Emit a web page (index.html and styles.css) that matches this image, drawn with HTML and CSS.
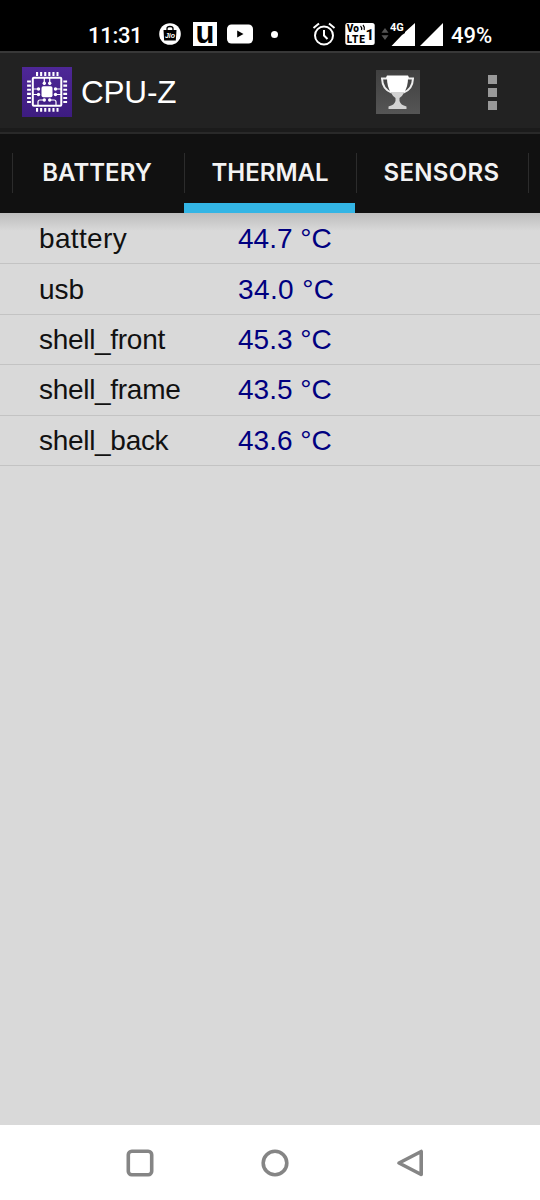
FILE: index.html
```html
<!DOCTYPE html>
<html lang="en">
<head>
  <meta charset="UTF-8" />
  <meta name="viewport" content="width=device-width, initial-scale=1.0"/>
  <title>CPU-Z</title>
  <link rel="stylesheet" href="styles.css">
</head>
<body>

  <!-- Status bar -->
  <div class="status-bar">
    <span class="clock">11:31</span>
    <svg class="jio" width="22" height="22" viewBox="0 0 22 22">
      <circle cx="11" cy="11" r="10.8" fill="#fff"/>
      <path d="M4.500 7h13l-.7 10.500H5.200z" fill="#000"/>
      <path d="M8 8V5.500q0-2 3-2t3 2V8" fill="none" stroke="#000" stroke-width="1.300"/>
      <text x="11" y="14.600" class="jio-text">Jio</text>
    </svg>
    <svg class="u-icon" width="24" height="24" viewBox="0 0 24 24">
      <path d="M0 0h24v24H0z" fill="#fff"/>
      <text x="12" y="20.500" class="u-text">u</text>
    </svg>
    <svg class="youtube" width="26" height="20" viewBox="0 0 26 20">
      <rect y=".5" width="26" height="19" rx="4.500" fill="#fff"/>
      <path d="M10.200 6.500v7l6.300-3.500z" fill="#000"/>
    </svg>
    <span class="dot"></span>
    <svg class="alarm" width="24" height="24" viewBox="0 0 24 24" fill="none" stroke="#fff" stroke-width="2">
      <circle cx="12" cy="13.500" r="9"/>
      <path d="M12 8v5.500l3.500 3.500M1.500 6 7 1.500M22.500 6 17 1.500"/>
    </svg>
    <svg class="volte" width="30" height="22" viewBox="0 0 30 22">
      <rect x=".3" width="29.400" height="22" rx="2.500" fill="#fff"/>
      <text x="1.800" y="9" class="volte-text">Vo</text>
      <text x="1.800" y="20" textLength="18" class="volte-text">LTE</text>
      <text x="20.500" y="17" class="volte-sim">1</text>
      <path d="M15.500 3q1.600 1.500 1 4M18 2q2 2 1.200 5" fill="none" stroke="#000" stroke-width="1.200"/>
    </svg>
    <svg class="arrows" width="8" height="12" viewBox="0 0 8 12">
      <path d="M4 0l3.500 4.800H.5zM4 12l3.500-4.800H.5z" fill="#555"/>
    </svg>
    <svg class="signal" width="26" height="24" viewBox="0 0 26 24">
      <path d="M25 1v23H1.500L12 13l3-2V10z" fill="#fff"/>
      <text x="0" y="9" class="signal-text">4G</text>
    </svg>
    <svg class="signal-two" width="23" height="24" viewBox="0 0 23 24">
      <path d="M23 1v23H0z" fill="#fff"/>
    </svg>
    <span class="percent">49%</span>
  </div>

  <!-- Action bar -->
  <header>
    <svg class="logo" width="50" height="50" viewBox="0 0 50 50">
      <defs>
        <linearGradient id="purple" x1="0" y1="0" x2="0" y2="1">
          <stop offset="0" stop-color="#4e2797"/>
          <stop offset="1" stop-color="#3d1c80"/>
        </linearGradient>
      </defs>
      <path d="M0 0h50v50H0z" fill="url(#purple)"/>
      <g fill="none" stroke="#fff">
        <path d="M14 7h22.500M14 42.800h22.500" stroke-width="3.800" stroke-dasharray="2.100 2"/>
        <path d="M7 13.500v22.600M43.200 13.500v22.600" stroke-width="3.800" stroke-dasharray="2.100 2"/>
        <rect x="10.800" y="10.800" width="28.500" height="28" rx="1" stroke-width="2"/>
        <path d="M22.300 11v7M27.700 11v7M11 22h7M11 27.500h7M39 22h-7M39 27.500h-7M16 38v-3q0-2 2-2h4.300M34 38v-3q0-2-2-2h-4.300" stroke-width="1.200"/>
      </g>
      <g fill="#fff">
        <rect x="19.500" y="19.300" width="11" height="11" rx="1.800"/>
        <circle cx="22.300" cy="16.300" r="1.700"/><circle cx="27.700" cy="16.300" r="1.700"/>
        <circle cx="16.500" cy="22" r="1.700"/><circle cx="16.500" cy="27.500" r="1.700"/>
        <circle cx="33.500" cy="22" r="1.700"/><circle cx="33.500" cy="27.500" r="1.700"/>
        <circle cx="22.300" cy="33" r="1.700"/><circle cx="27.700" cy="33" r="1.700"/>
      </g>
    </svg>
    <h1>CPU-Z</h1>
    <button class="trophy">
      <svg width="44" height="44" viewBox="0 0 44 44">
        <path d="M12 8.500H6q.5 11 9.500 14M31 8.500h6q-.5 11-9.500 14" fill="none" stroke="#eee" stroke-width="2"/>
        <path d="M11 5.500h21l1 2-1 1q0 7.500-3.500 13.500H14.500Q11 16 11 8.500l-1-1z" fill="#fff"/>
        <path d="M14.500 22h14q-2 4-5 6v3q1 4 7 5.500V39h-18v-2.500q6-1.500 7-5.500v-3q-3-2-5-6z" fill="#d2d2d2"/>
      </svg>
    </button>
    <button class="menu"><i></i><i></i><i></i></button>
  </header>

  <!-- Tabs -->
  <nav>
    <button>BATTERY</button>
    <button class="active">THERMAL</button>
    <button class="sensors">SENSORS</button>
    <button class="next"></button>
  </nav>

  <!-- Temperatures -->
  <main>
    <div class="row"><span class="short">battery</span><span class="value">44.7 °C</span></div>
    <div class="row"><span>usb</span><span class="value wide">34.0 °C</span></div>
    <div class="row"><span class="long">shell_front</span><span class="value">45.3 °C</span></div>
    <div class="row"><span class="long">shell_frame</span><span class="value">43.5 °C</span></div>
    <div class="row"><span class="long">shell_back</span><span class="value">43.6 °C</span></div>
  </main>

  <!-- Navigation bar -->
  <footer>
    <svg width="28" height="28" viewBox="0 0 28 28"><rect x="2.300" y="2.300" width="23.400" height="23.400" rx="3.500"/></svg>
    <svg width="28" height="28" viewBox="0 0 28 28"><circle cx="14" cy="14" r="11.800"/></svg>
    <svg width="28" height="28" viewBox="0 0 28 28"><path d="M25.200 2.500v23L3 14z"/></svg>
  </footer>

</body>
</html>
```
FILE: styles.css
```css
* {
  margin: 0;
  padding: 0;
  box-sizing: border-box;
}

body {
  width: 540px;
  height: 1200px;
  display: flex;
  flex-direction: column;
  overflow: hidden;
  background: #d9d9d9;
  font-family: 'Liberation Sans', sans-serif;
}

button {
  border: none;
  background: transparent;
  color: inherit;
}

/* Status bar */
.status-bar {
  height: 51px;
  flex: none;
  display: flex;
  align-items: center;
  padding: 17px 0 0 88px;
  background: #000;
  color: #fff;
  font: 500 22px Roboto, sans-serif;
}

.status-bar svg {
  flex: none;
}

.clock {
  width: 71px;
  padding-top: 2px;
  letter-spacing: -0.3px;
}

.jio-text {
  font: italic bold 7px 'Liberation Sans', sans-serif;
  fill: #fff;
  text-anchor: middle;
}

.u-icon {
  margin-left: 12px;
}

.u-text {
  font: bold 31px 'Liberation Sans', sans-serif;
  text-anchor: middle;
}

.youtube {
  margin-left: 10px;
}

.dot {
  width: 7px;
  height: 7px;
  margin-left: 18px;
  border-radius: 50%;
  background: #fff;
}

.alarm {
  margin-left: 34px;
}

.volte {
  margin-left: 9px;
}

.volte-text {
  font: 900 10px Roboto, sans-serif;
}

.volte-sim {
  font: bold 15px Roboto, sans-serif;
}

.arrows {
  margin-left: 6px;
}

.signal {
  margin-left: 1px;
}

.signal-text {
  font: bold 11px Roboto, sans-serif;
  fill: #fff;
}

.signal-two {
  margin-left: 4px;
}

.percent {
  margin-left: 8px;
  padding-top: 2px;
}

/* Action bar */
header {
  height: 83px;
  flex: none;
  display: flex;
  align-items: center;
  padding: 0 43px 2px 22px;
  background: #222;
  border-top: 2px solid #383838;
  border-bottom: 2px solid #292929;
  box-shadow: inset 0 -4px #1b1b1b;
  color: #fff;
}

h1 {
  margin-left: 9px;
  padding-top: 2px;
  font-size: 31.5px;
  font-weight: normal;
  letter-spacing: -0.2px;
}

.trophy {
  width: 44px;
  height: 44px;
  margin-left: auto;
  background: linear-gradient(#404040, #555);
}

.trophy svg {
  display: block;
}

.menu {
  width: 9px;
  margin-left: 68px;
  padding-top: 1px;
  display: flex;
  flex-direction: column;
  gap: 4px;
}

.menu i {
  width: 9px;
  height: 9px;
  background: #999;
}

/* Tabs */
nav {
  height: 79px;
  flex: none;
  display: flex;
  padding-left: 12px;
  background: #111;
  color: #f3f3f3;
}

nav button {
  width: 172px;
  flex: none;
  padding: 0 2px 2px 0;
  background: linear-gradient(#2c2c2c, #2c2c2c) 0 19px / 1px 40px no-repeat;
  font: 600 24px Inter, sans-serif;
}

nav .active {
  padding-right: 0;
  background: linear-gradient(#2c2c2c, #2c2c2c) 0 19px / 1px 40px no-repeat,
    linear-gradient(#33b5e5, #33b5e5) 0 100% / 171px 10px no-repeat;
}

nav .sensors {
  padding-right: 1px;
  letter-spacing: 0.3px;
}

nav .next {
  width: auto;
  flex: 1;
  padding: 0;
}

/* Temperatures */
main {
  flex: 1;
  padding-top: 1px;
  background: linear-gradient(#bdbdbd, #d9d9d9 18px);
}

.row {
  height: 50.4px;
  display: grid;
  grid-template-columns: 199px 1fr;
  align-items: center;
  padding: 1px 0 0 39px;
  border-bottom: 1px solid #c3c3c3;
  color: #111;
  font-size: 28px;
}

.short {
  letter-spacing: 0.35px;
}

.long {
  letter-spacing: -0.3px;
}

.value {
  color: #000080;
}

.wide {
  letter-spacing: 0.4px;
}

/* Navigation bar */
footer {
  height: 75px;
  flex: none;
  display: flex;
  justify-content: center;
  align-items: center;
  gap: 107px;
  padding-left: 10px;
  background: #fff;
}

footer svg {
  fill: none;
  stroke: #858585;
  stroke-width: 3.6;
  stroke-linejoin: round;
}
```
